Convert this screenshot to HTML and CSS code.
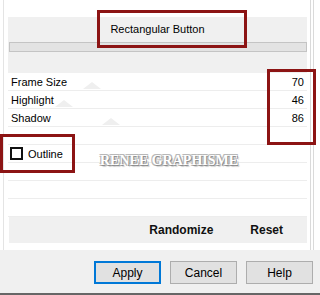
FILE: index.html
```html
<!DOCTYPE html>
<html lang="en">
<head>
    <meta charset="UTF-8">
    <title>Rectangular Button</title>
    <link rel="stylesheet" href="styles.css">
</head>
<body>

<div class="dialog">
    <div class="top">
        <div class="gutter"></div>
        <div class="pane">
            <!-- Preset -->
            <div class="preset">
                <div class="preset-title">Rectangular Button</div>
                <div class="track"></div>
            </div>

            <!-- Parameters -->
            <div class="row">
                <span>Frame Size</span><span class="value">70</span>
                <i class="thumb" style="left: 75px;"></i>
            </div>
            <div class="row">
                <span>Highlight</span><span class="value">46</span>
                <i class="thumb" style="left: 47px;"></i>
            </div>
            <div class="row">
                <span>Shadow</span><span class="value">86</span>
                <i class="thumb" style="left: 94px;"></i>
            </div>
            <div class="row"></div>
            <div class="row">
                <label class="check"><span class="box"></span>Outline</label>
            </div>
            <div class="row"></div>
            <div class="row"></div>
            <div class="row"></div>

            <div class="actions">
                <span>Randomize</span>
                <span>Reset</span>
            </div>
        </div>
        <div class="rail"></div>
    </div>

    <div class="buttons">
        <button class="btn default">Apply</button>
        <button class="btn">Cancel</button>
        <button class="btn">Help</button>
    </div>

    <!-- annotations -->
    <div class="mark mark-title"></div>
    <div class="mark mark-values"></div>
    <div class="mark mark-outline"></div>
    <div class="watermark">RENEE GRAPHISME</div>
</div>

</body>
</html>
```

FILE: styles.css
```css
body {
    margin: 0;
    font-family: "Liberation Sans", Arial, sans-serif;
    font-size: 11px;
    color: #000;
    background-color: #f0f0f0;
}
.dialog {
    position: relative;
    width: 320px;
    height: 295px;
}
.top {
    display: flex;
    height: 250px;
    background-color: #fff;
}
.gutter {
    width: 4px;
    margin-left: 3px;
    border-left: 1px solid #e4e4e4;
}
.pane {
    width: 299px;
    padding-top: 17px;
}
.rail {
    width: 2px;
    margin-left: 3px;
    border-left: 1px solid #dadada;
    border-right: 1px solid #dadada;
}
.preset {
    height: 56px;
    background-color: #f0f0f0;
}
.preset-title {
    padding-top: 6px;
    line-height: 13px;
    text-align: center;
}
.track {
    height: 8px;
    margin: 6px 0 0 1px;
    background-color: #e3e3e3;
    border: 1px solid #c4c4c4;
}
.row {
    position: relative;
    display: flex;
    justify-content: space-between;
    align-items: center;
    height: 17px;
    padding: 0 2px 0 3px;
    border-bottom: 1px solid #ededed;
}
.value {
    padding-right: 1px;
}
.thumb {
    position: absolute;
    bottom: 1px;
    width: 0;
    height: 0;
    border-left: 9px solid transparent;
    border-right: 9px solid transparent;
    border-bottom: 7px solid #efefef;
}
.check {
    display: flex;
    align-items: center;
    gap: 5px;
    margin-left: -1px;
}
.box {
    width: 9px;
    height: 9px;
    border: 2px solid #111;
    background-color: #fff;
}
.actions {
    display: flex;
    justify-content: flex-end;
    align-items: center;
    gap: 37px;
    height: 26px;
    margin-left: 1px;
    padding-right: 24px;
    background-color: #f0f0f0;
    font-size: 12px;
    font-weight: bold;
    color: #111;
}
.buttons {
    display: flex;
    justify-content: flex-end;
    gap: 9px;
    height: 32px;
    padding: 11px 7px 0 0;
    border-bottom: 2px solid #666;
}
.btn {
    width: 67px;
    height: 23px;
    padding: 0;
    font-family: "Liberation Sans", Arial, sans-serif;
    font-size: 12px;
    color: #000;
    background-color: #e1e1e1;
    border: 1px solid #adadad;
}
.btn.default {
    border: 2px solid #0078d7;
}
.mark {
    position: absolute;
    border: 3px solid #8c1414;
}
.mark-title {
    left: 97px;
    top: 10px;
    width: 144px;
    height: 32px;
}
.mark-values {
    left: 267px;
    top: 69px;
    width: 43px;
    height: 70px;
}
.mark-outline {
    left: 0;
    top: 134px;
    width: 69px;
    height: 33px;
}
.watermark {
    position: absolute;
    left: 100px;
    top: 153px;
    font-family: "Liberation Serif", "Times New Roman", serif;
    font-size: 14px;
    font-weight: bold;
    color: #fff;
    text-shadow: 1px 1px 0 #8e8e8e, -1px -1px 0 #b8b8b8, 1px -1px 0 #b8b8b8, -1px 1px 0 #b8b8b8, 2px 2px 1px #cfcfcf;
}
```
